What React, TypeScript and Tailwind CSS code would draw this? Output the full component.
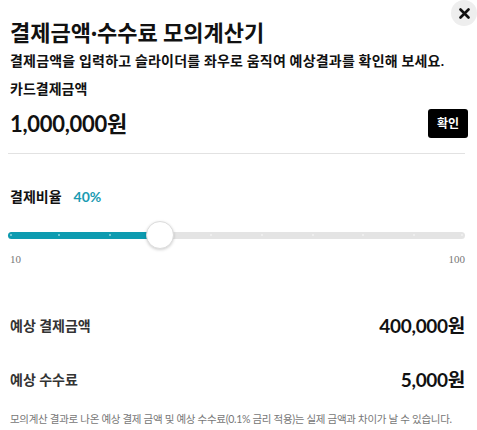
import React from 'react';

const KR = "font-['Lato','Noto_Sans_CJK_KR',sans-serif]";

export default function App() {
  const min = 10;
  const max = 100;
  const value = 40;
  const pct = ((value - min) / (max - min)) * 100;
  const ticks = Array.from({ length: 10 }, (_, i) => (i / 9) * 100);

  return (
    <div className={`relative w-[477px] h-[430px] bg-white overflow-hidden pl-2 pr-3 ${KR} text-[#111]`}>
      {/* close */}
      <button className="absolute right-0 top-0 w-[26px] h-[26px] rounded-full bg-[#eeeeee] flex items-center justify-center">
        <svg width="11" height="11" viewBox="0 0 11 11">
          <path d="M1.5 1.5 L9.5 9.5 M9.5 1.5 L1.5 9.5" stroke="#111" strokeWidth="2.6" strokeLinecap="round" />
        </svg>
      </button>

      <h1 className="pl-[2px] pt-[18px] text-[22px] leading-[30px] font-bold">
        결제금액·수수료 모의계산기
      </h1>
      <p className="pl-[2px] mt-[3px] text-[14px] leading-[20px] font-bold tracking-[0.2px]">
        결제금액을 입력하고 슬라이더를 좌우로 움직여 예상결과를 확인해 보세요.
      </p>
      <p className="pl-[2px] mt-[8px] text-[14px] leading-[20px] font-bold">카드결제금액</p>

      <div className="mt-[10px] flex items-center justify-between pb-[15px] border-b border-[#e2e2e2]">
        <span className="pl-[2px] text-[22px] leading-[29px] font-bold tracking-[-0.3px]">1,000,000원</span>
        <button className="mr-[-3px] w-[40px] h-[29px] rounded-[3px] bg-black text-white text-[12px] font-bold">
          확인
        </button>
      </div>

      <div className="mt-[33px] flex items-center gap-[12px] pl-[2px] text-[14px] leading-[20px] font-bold">
        <span>결제비율</span>
        <span className="text-[#1a9bb2]">{value}%</span>
      </div>

      {/* slider */}
      <div className="relative mt-[13px] h-[30px] flex items-center">
        <div className="relative w-full h-[7px] rounded-full bg-[#e4e4e4]">
          <div className="absolute left-0 top-0 h-full rounded-full bg-[#0d9bb0]" style={{ width: `${pct}%` }} />
          {ticks.map((t, i) => (
            <span
              key={i}
              className={`absolute top-[2.5px] w-[2px] h-[2px] rounded-full ${t <= pct ? 'bg-[#8fd3de]' : 'bg-[#f2f2f2]'}`}
              style={{ left: `calc(${t}% - 1px + ${i === 0 ? 3 : i === 9 ? -3 : 0}px)` }}
            />
          ))}
        </div>
        <div
          className="absolute top-[1px] w-[28px] h-[28px] rounded-full bg-white border border-[#dcdcdc] shadow-[0_1px_3px_rgba(0,0,0,0.18)]"
          style={{ left: `calc(${pct}% - 14px)` }}
        />
      </div>
      <div className="mt-[2px] flex justify-between font-['Liberation_Serif',serif] text-[11px] leading-[14px] text-[#777]">
        <span className="pl-[2px]">10</span>
        <span>100</span>
      </div>

      {/* results */}
      <div className="mt-[48px] flex items-center justify-between">
        <span className="pl-[2px] text-[14px] leading-[20px] font-bold text-[#333]">예상 결제금액</span>
        <span className="text-[19px] leading-[24px] font-bold tracking-[-0.3px]">400,000원</span>
      </div>
      <div className="mt-[30px] flex items-center justify-between">
        <span className="pl-[2px] text-[14px] leading-[20px] font-bold text-[#333]">예상 수수료</span>
        <span className="text-[19px] leading-[24px] font-bold tracking-[-0.3px]">5,000원</span>
      </div>

      <p className="mt-[19px] pl-[2px] text-[10.5px] leading-[16px] text-[#777] tracking-[-0.3px] whitespace-nowrap">
        모의계산 결과로 나온 예상 결제 금액 및 예상 수수료(0.1% 금리 적용)는 실제 금액과 차이가 날 수 있습니다.
      </p>
    </div>
  );
}
